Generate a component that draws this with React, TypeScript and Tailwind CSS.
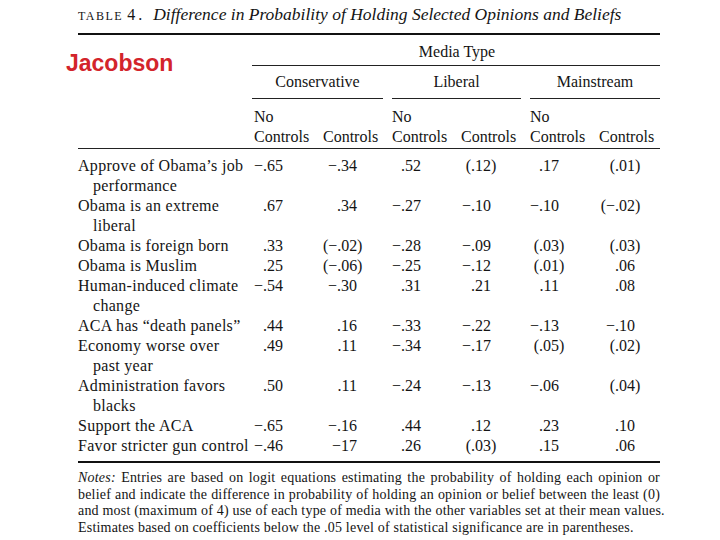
import React from 'react'

interface Row {
    label: string[]
    values: string[]
}

const rows: Row[] = [
    { label: ['Approve of Obama’s job', 'performance'], values: ['−.65', '−.34', '.52', '(.12)', '.17', '(.01)'] },
    { label: ['Obama is an extreme', 'liberal'], values: ['.67', '.34', '−.27', '−.10', '−.10', '(−.02)'] },
    { label: ['Obama is foreign born'], values: ['.33', '(−.02)', '−.28', '−.09', '(.03)', '(.03)'] },
    { label: ['Obama is Muslim'], values: ['.25', '(−.06)', '−.25', '−.12', '(.01)', '.06'] },
    { label: ['Human-induced climate', 'change'], values: ['−.54', '−.30', '.31', '.21', '.11', '.08'] },
    { label: ['ACA has “death panels”'], values: ['.44', '.16', '−.33', '−.22', '−.13', '−.10'] },
    { label: ['Economy worse over', 'past year'], values: ['.49', '.11', '−.34', '−.17', '(.05)', '(.02)'] },
    { label: ['Administration favors', 'blacks'], values: ['.50', '.11', '−.24', '−.13', '−.06', '(.04)'] },
    { label: ['Support the ACA'], values: ['−.65', '−.16', '.44', '.12', '.23', '.10'] },
    { label: ['Favor stricter gun control'], values: ['−.46', '−17', '.26', '(.03)', '.15', '.06'] },
]

// width of the right-aligned part of each value column (the closing paren hangs)
const valueWidths = ['w-[29px]', 'w-[34px]', 'w-[29px]', 'w-[30px]', 'w-[29px]', 'w-[36px]']

const cols = 'grid grid-cols-[176px_69px_69px_69px_69px_69px_61px]'

const Value = ({ text, width }: { text: string; width: string }) => {
    const closing = text.endsWith(')')
    const main = closing ? text.slice(0, -1) : text
    return (
        <div className="flex">
            <span className={`${width} text-right whitespace-nowrap`}>{main}</span>
            <span>{closing ? ')' : ''}</span>
        </div>
    )
}

export default function App() {
    return (
        <div className="w-[720px] h-[540px] bg-white overflow-hidden text-[#141414] font-['Liberation_Serif',serif]">
            <div className="w-[582px] ml-[78px] pt-[4px]">
                {/* Title */}
                <div className="h-[20px] leading-[20px] whitespace-nowrap flex items-baseline">
                    <span className="text-[12px] uppercase tracking-[1.5px]">Table</span>
                    <span className="text-[16px] ml-[4px] tracking-[3px]">4.</span>
                    <span className="text-[17.5px] italic ml-[8px]">
                        Difference in Probability of Holding Selected Opinions and Beliefs
                    </span>
                </div>
                <div className="mt-[9px] border-t-2 border-[#111]" />

                {/* Column header */}
                <div className="flex">
                    <div className="w-[176px] pt-[15px]">
                        <span className="-ml-[12px] font-['Liberation_Sans',sans-serif] font-bold text-[23px] leading-[27px] text-[#d3242b]">
                            Jacobson
                        </span>
                    </div>
                    <div className="flex-1 text-[16px] leading-[20px]">
                        <div className="mt-[7px] text-center">Media Type</div>
                        <div className="mt-[3px] border-t border-[#222] -ml-[2px]" />
                        <div className="flex -ml-[2px]">
                            <div className="w-[131px] mr-[9px]">
                                <div className="mt-[6px] text-center">Conservative</div>
                                <div className="mt-[6px] border-t-[1.5px] border-[#222]" />
                            </div>
                            <div className="w-[129px] mr-[9px]">
                                <div className="mt-[6px] text-center">Liberal</div>
                                <div className="mt-[6px] border-t-[1.5px] border-[#222]" />
                            </div>
                            <div className="flex-1">
                                <div className="mt-[6px] text-center">Mainstream</div>
                                <div className="mt-[6px] border-t-[1.5px] border-[#222]" />
                            </div>
                        </div>
                    </div>
                </div>

                <div className={`${cols} mt-[8px] text-[16px] leading-[20px]`}>
                    <div />
                    {[0, 1, 2].map((g) => (
                        <React.Fragment key={g}>
                            <div>
                                No
                                <br />
                                Controls
                            </div>
                            <div className="flex items-end">Controls</div>
                        </React.Fragment>
                    ))}
                </div>
                <div className="mt-[1px] border-t border-[#222]" />

                {/* Body */}
                <div className="mt-[7px] text-[16px] leading-[20px]">
                    {rows.map((row) => (
                        <div key={row.label[0]} className={cols}>
                            <div className="tracking-[0.3px] whitespace-nowrap">
                                <div>{row.label[0]}</div>
                                {row.label[1] && <div className="pl-[15px]">{row.label[1]}</div>}
                            </div>
                            {row.values.map((v, i) => (
                                <Value key={i} text={v} width={valueWidths[i]} />
                            ))}
                        </div>
                    ))}
                </div>
                <div className="mt-[5px] border-t-2 border-[#111]" />

                {/* Notes */}
                <div className="mt-[7px] text-[14px] leading-[16.7px] tracking-[0.2px]">
                    <div className="text-justify [text-align-last:justify] whitespace-nowrap">
                        <span className="italic">Notes:</span> Entries are based on logit equations estimating the probability of holding each opinion or
                    </div>
                    <div className="text-justify [text-align-last:justify] whitespace-nowrap">
                        belief and indicate the difference in probability of holding an opinion or belief between the least (0)
                    </div>
                    <div className="text-justify [text-align-last:justify] whitespace-nowrap">
                        and most (maximum of 4) use of each type of media with the other variables set at their mean values.
                    </div>
                    <div className="whitespace-nowrap">
                        Estimates based on coefficients below the .05 level of statistical significance are in parentheses.
                    </div>
                </div>
            </div>
        </div>
    )
}
